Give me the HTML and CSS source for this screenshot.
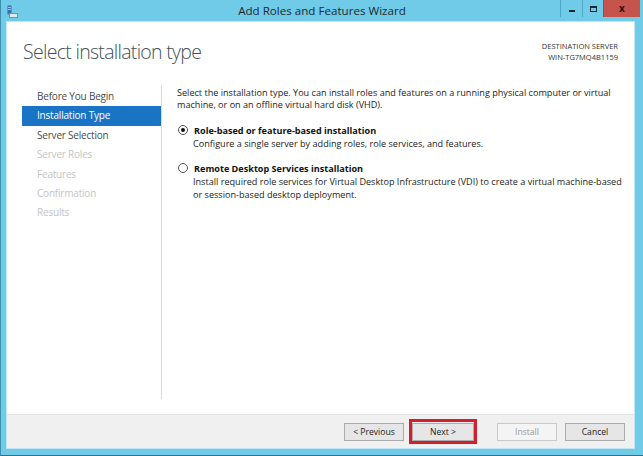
FILE: index.html
```html
<!DOCTYPE html>
<html>
<head>
<meta charset="utf-8">
<link rel="stylesheet" href="styles.css">
</head>
<body>
<div class="window">
  <div class="titlebar">
    <svg class="app-icon" width="11" height="13" viewBox="0 0 11 13">
      <rect x="0.5" y="0.5" width="4" height="9" fill="#3f6fa8"/>
      <rect x="1" y="2" width="3" height="1" fill="#9cc7ef"/>
      <rect x="1" y="4" width="3" height="1" fill="#9cc7ef"/>
      <rect x="2" y="8" width="9" height="5" fill="#7a8fa8"/>
      <rect x="3" y="9" width="7" height="3" fill="#dfe8f1"/>
    </svg>
    <div class="title">Add Roles and Features Wizard</div>
    <div class="controls">
      <div class="ctl ctl-min"><span class="min-glyph"></span></div>
      <div class="ctl ctl-max"><span class="max-glyph"></span></div>
      <div class="ctl ctl-close"><span class="close-glyph">x</span></div>
    </div>
  </div>
  <div class="client">
    <div class="header">
      <h1 class="heading">Select installation type</h1>
      <div class="dest">
        <div>DESTINATION SERVER</div>
        <div>WIN-TG7MQ4B1159</div>
      </div>
    </div>
    <div class="main">
      <nav class="nav">
        <div class="nav-item">Before You Begin</div>
        <div class="nav-item active">Installation Type</div>
        <div class="nav-item">Server Selection</div>
        <div class="nav-item disabled">Server Roles</div>
        <div class="nav-item disabled">Features</div>
        <div class="nav-item disabled">Confirmation</div>
        <div class="nav-item disabled">Results</div>
      </nav>
      <div class="divider"></div>
      <div class="content">
        <p class="intro">Select the installation type. You can install roles and features on a running physical computer or virtual machine, or on an offline virtual hard disk (VHD).</p>
        <div class="option">
          <div class="option-row"><span class="radio checked"></span><span class="opt-label">Role-based or feature-based installation</span></div>
          <p class="opt-desc">Configure a single server by adding roles, role services, and features.</p>
        </div>
        <div class="option">
          <div class="option-row"><span class="radio"></span><span class="opt-label">Remote Desktop Services installation</span></div>
          <p class="opt-desc">Install required role services for Virtual Desktop Infrastructure (VDI) to create a virtual <span class="nowrap">machine-based</span> or <span class="nowrap">session-based</span> desktop deployment.</p>
        </div>
      </div>
    </div>
    <div class="footer">
      <button class="btn">&lt; Previous</button>
      <div class="highlight"><button class="btn btn-next">Next &gt;</button></div>
      <button class="btn btn-disabled">Install</button>
      <button class="btn">Cancel</button>
    </div>
  </div>
</div>
</body>
</html>
```
FILE: styles.css
```css
* { box-sizing: border-box; }
html, body { margin: 0; padding: 0; }
body {
  width: 643px;
  height: 456px;
  overflow: hidden;
  font-family: "Open Sans", "Noto Sans", sans-serif;
  background: #6fcbe8;
}
.window {
  width: 643px;
  height: 456px;
  display: flex;
  flex-direction: column;
  background: #6fcbe8;
  border-left: 1px solid #3d8fae;
  border-bottom: 1px solid #2f6f88;
}
.titlebar {
  height: 22px;
  position: relative;
  display: flex;
  align-items: center;
  flex: none;
}
.app-icon {
  margin-left: 6px;
  margin-top: 1px;
}
.title {
  position: absolute;
  left: 0;
  right: 0;
  top: 3px;
  text-align: center;
  font-size: 11.6px;
  color: #1b2a33;
}
.controls {
  position: absolute;
  top: 0;
  right: 3px;
  display: flex;
  height: 17px;
}
.ctl {
  height: 17px;
  display: flex;
  align-items: center;
  justify-content: center;
  border-left: 1px solid #4ea7c7;
}
.ctl-min { width: 22px; }
.ctl-max { width: 21px; }
.ctl-close { width: 37px; background: #c7534d; border-left-color: #a94440; }
.min-glyph { display: block; width: 6px; height: 2px; background: #1a2630; margin-top: 5px; }
.max-glyph { display: block; width: 7px; height: 6px; border: 1.5px solid #1a2630; border-top-width: 2px; }
.close-glyph { font-size: 10px; font-weight: 700; color: #2a1212; line-height: 1; margin-top: -2px; }

.client {
  flex: 1;
  margin: 0 9px 7px 6px;
  background: #ffffff;
  display: flex;
  flex-direction: column;
  box-shadow: 0 0 0 1px #bfe6f4;
}
.header {
  height: 64px;
  display: flex;
  justify-content: space-between;
  align-items: flex-start;
  padding: 0 16px 0 16px;
}
.heading {
  margin: 16px 0 0 0;
  font-size: 19.5px;
  font-weight: 300;
  color: #434f59;
  letter-spacing: -0.7px;
}
.dest {
  margin-top: 19px;
  font-size: 7.5px;
  line-height: 11px;
  text-align: right;
  color: #333;
}
.main {
  flex: 1;
  display: flex;
}
.nav {
  width: 139px;
  margin-left: 15px;
  padding-top: 1px;
}
.nav-item {
  height: 19.4px;
  line-height: 19px;
  padding-left: 15px;
  font-size: 10px;
  letter-spacing: -0.2px;
  color: #4a4a4a;
}
.nav-item.active {
  background: #1a74c6;
  color: #fff;
}
.nav-item.disabled { color: #c4c4c4; }
.divider {
  width: 1px;
  background: #d8d8d8;
  margin-bottom: 15px;
  margin-top: -1px;
}
.content {
  flex: 1;
  padding: 1px 3px 0 15px;
  font-size: 9.1px;
  color: #222;
}
.nowrap { white-space: nowrap; }
.intro {
  margin: 0;
  line-height: 12px;
}
.option { margin-top: 12px; }
.option + .option { margin-top: 11px; }
.option-row {
  display: flex;
  align-items: center;
  height: 14px;
  padding-left: 1px;
}
.radio {
  width: 10px;
  height: 10px;
  border: 1px solid #555;
  border-radius: 50%;
  background: #fff;
  margin-right: 6px;
  display: inline-flex;
  align-items: center;
  justify-content: center;
}
.radio.checked::after {
  content: "";
  width: 4px;
  height: 4px;
  border-radius: 50%;
  background: #111;
}
.opt-label { font-weight: 700; color: #111; }
.opt-desc {
  margin: 0;
  padding-left: 16px;
  line-height: 13px;
}
.footer {
  height: 34px;
  flex: none;
  background: #f0f0f0;
  border-top: 1px solid #e3e3e3;
  display: flex;
  align-items: center;
  justify-content: flex-end;
  padding-right: 9px;
}
.btn {
  width: 60px;
  height: 18px;
  padding: 0;
  font-family: "Open Sans", "Noto Sans", sans-serif;
  font-size: 8.6px;
  color: #222;
  background: #e6e6e6;
  border: 1px solid #acacac;
}
.highlight {
  border: 3px solid #d0202e;
  padding: 0;
  margin: 0 20px 0 5px;
  height: 25px;
  width: 68px;
  display: flex;
  align-items: center;
  justify-content: center;
}
.btn-next { width: 62px; }
.btn-disabled {
  background: #f4f4f4;
  border-color: #c9c9c9;
  color: #9a9a9a;
  margin-right: 8px;
}
```
